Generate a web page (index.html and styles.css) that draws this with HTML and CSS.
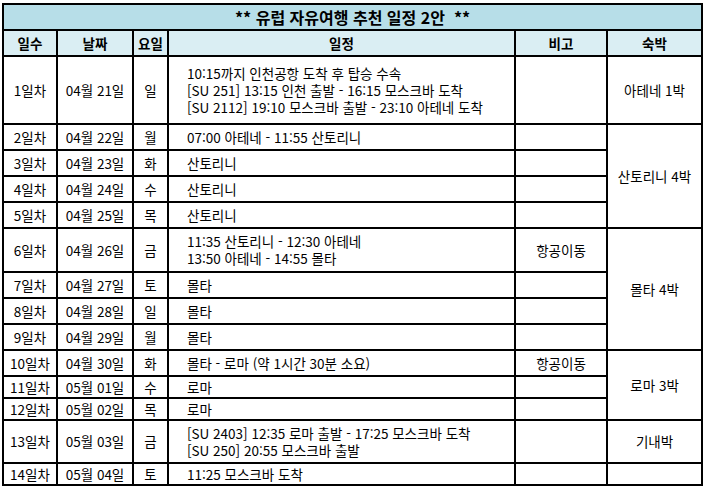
FILE: index.html
```html
<!DOCTYPE html>
<html lang="ko">
<head>
<meta charset="utf-8">
<title>유럽 자유여행 추천 일정 2안</title>
<link rel="stylesheet" href="styles.css">
</head>
<body>
<div class="wrap">
<table class="plan">
  <colgroup>
    <col class="c-day"><col class="c-date"><col class="c-wd"><col class="c-sched"><col class="c-note"><col class="c-stay">
  </colgroup>
  <thead>
    <tr class="r-title"><th colspan="6" class="title">** 유럽 자유여행 추천 일정 2안&nbsp;&nbsp;**</th></tr>
    <tr class="r-head"><th>일수</th><th>날짜</th><th>요일</th><th>일정</th><th>비고</th><th>숙박</th></tr>
  </thead>
  <tbody>
    <tr class="r-3"><td>1일차</td><td>04월 21일</td><td>일</td><td class="sched">10:15까지 인천공항 도착 후 탑승 수속<br>[SU 251] 13:15 인천 출발 - 16:15 모스크바 도착<br>[SU 2112] 19:10 모스크바 출발 - 23:10 아테네 도착</td><td></td><td>아테네 1박</td></tr>
    <tr class="r-1"><td>2일차</td><td>04월 22일</td><td>월</td><td class="sched">07:00 아테네 - 11:55 산토리니</td><td></td><td rowspan="4">산토리니 4박</td></tr>
    <tr class="r-1"><td>3일차</td><td>04월 23일</td><td>화</td><td class="sched">산토리니</td><td></td></tr>
    <tr class="r-1"><td>4일차</td><td>04월 24일</td><td>수</td><td class="sched">산토리니</td><td></td></tr>
    <tr class="r-1"><td>5일차</td><td>04월 25일</td><td>목</td><td class="sched">산토리니</td><td></td></tr>
    <tr class="r-2"><td>6일차</td><td>04월 26일</td><td>금</td><td class="sched">11:35 산토리니 - 12:30 아테네<br>13:50 아테네 - 14:55 몰타</td><td>항공이동</td><td rowspan="4">몰타 4박</td></tr>
    <tr class="r-1"><td>7일차</td><td>04월 27일</td><td>토</td><td class="sched">몰타</td><td></td></tr>
    <tr class="r-1"><td>8일차</td><td>04월 28일</td><td>일</td><td class="sched">몰타</td><td></td></tr>
    <tr class="r-1"><td>9일차</td><td>04월 29일</td><td>월</td><td class="sched">몰타</td><td></td></tr>
    <tr class="r-1"><td>10일차</td><td>04월 30일</td><td>화</td><td class="sched">몰타 - 로마 (약 1시간 30분 소요)</td><td>항공이동</td><td rowspan="3">로마 3박</td></tr>
    <tr class="r-s"><td>11일차</td><td>05월 01일</td><td>수</td><td class="sched">로마</td><td></td></tr>
    <tr class="r-s"><td>12일차</td><td>05월 02일</td><td>목</td><td class="sched">로마</td><td></td></tr>
    <tr class="r-2s"><td>13일차</td><td>05월 03일</td><td>금</td><td class="sched">[SU 2403] 12:35 로마 출발 - 17:25 모스크바 도착<br>[SU 250] 20:55 모스크바 출발</td><td></td><td>기내박</td></tr>
    <tr class="r-s"><td>14일차</td><td>05월 04일</td><td>토</td><td class="sched">11:25 모스크바 도착</td><td></td><td></td></tr>
  </tbody>
</table>
</div>
</body>
</html>
```

FILE: styles.css
```css
html, body {
  margin: 0;
  padding: 0;
  background: #ffffff;
}
.wrap {
  padding: 3px 0 0 2px;
}
.plan {
  border-collapse: collapse;
  table-layout: fixed;
  width: 699px;
  font-family: "Noto Sans CJK KR", "Noto Sans", sans-serif;
  font-size: 13.5px;
  line-height: 17px;
  color: #000;
}
.plan td, .plan th {
  border: 2px solid #000;
  padding: 0;
  text-align: center;
  vertical-align: middle;
  white-space: nowrap;
  overflow: hidden;
}
.c-day { width: 54px; }
.c-date { width: 76px; }
.c-wd { width: 35px; }
.c-sched { width: 347px; }
.c-note { width: 92px; }
.c-stay { width: 95px; }
.title {
  background: #b7dee8;
  font-size: 16px;
  font-weight: bold;
  height: 24px;
}
.r-head th {
  background: #daeef3;
  font-weight: bold;
  height: 24px;
}
.plan td.sched {
  text-align: left;
  padding-left: 18px;
}
.r-3 td { height: 66px; }
.r-1 td { height: 24px; }
.r-2 td { height: 42px; }
.r-s td { height: 20px; }
.r-2s td { height: 41px; }
```
